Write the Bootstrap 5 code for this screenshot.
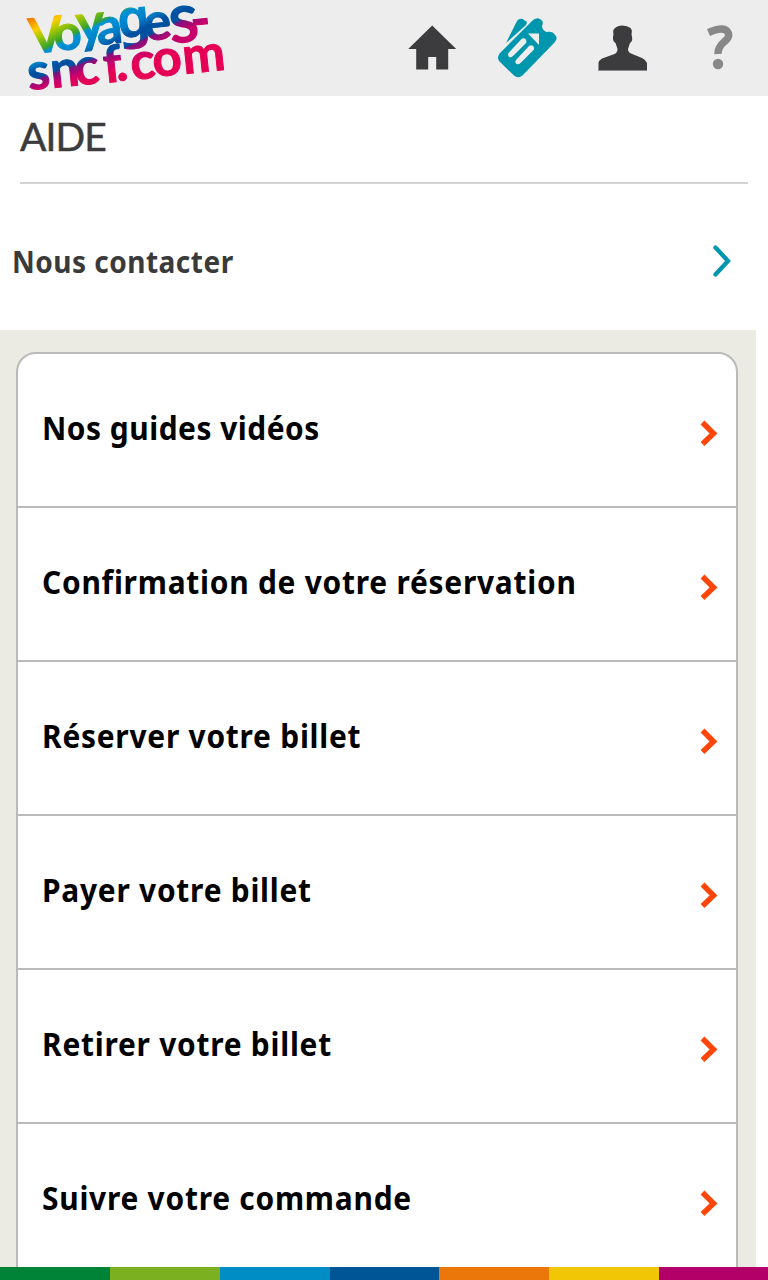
<!DOCTYPE html>
<html lang="fr">
<head>
<meta charset="utf-8">
<meta name="viewport" content="width=device-width, initial-scale=1">
<title>Aide - Voyages-sncf.com</title>
<link rel="stylesheet" href="https://cdn.jsdelivr.net/npm/bootstrap@5.3.0/dist/css/bootstrap.min.css">
<style>
body{font-family:"Noto Sans","Open Sans",sans-serif;color:#000;background:#fff}
.topbar{height:96px;background:#ededed}
.topbar svg{display:block}
.page-title{font:400 39px/48px Lato,sans-serif;letter-spacing:-.9px;color:#3c3c3d;-webkit-text-stroke:.5px #3c3c3d;margin:0 20px;padding:16px 0 22px;height:88px;border-bottom:2px solid #d4d4d4}
.contact{height:146px;padding:8px 36px 0 12px;color:#3a3a3b;font-size:30px;font-weight:700}
.contact .label-text{letter-spacing:.5px}
.help-zone{width:756px;background:#ebebe3;padding:22px 18px 0 16px}
.help-list{--bs-list-group-border-radius:20px}
.help-list .list-group-item{height:154px;padding:0 18px 4px 24px;border:2px solid #bababa;border-top-width:0;color:#000;font-size:32px;font-weight:700}
.help-list .list-group-item:first-child{height:156px;border-top-width:2px}
.help-list .list-group-item:last-child{border-radius:0}
.label-text{display:inline-block;transform:scaleX(.935);transform-origin:0 50%;white-space:nowrap;letter-spacing:.8px}
.help-list .list-group-item:first-child .label-text{letter-spacing:.54px}
.stripe{height:13px}
.stripe span{flex:110 1 0}
.stripe span:last-child{flex-grow:109}
</style>
</head>
<body class="vh-100 overflow-hidden">
<header class="topbar d-flex">
<svg width="768" height="96" viewBox="0 0 768 96" role="img" aria-label="Voyages-sncf.com">
<defs><linearGradient id="rainbow" gradientUnits="userSpaceOnUse" x1="0" y1="0" x2="54" y2="108">
<stop offset=".25" stop-color="#ef7d00"/><stop offset=".35" stop-color="#fc0"/><stop offset=".42" stop-color="#a5c800"/><stop offset=".52" stop-color="#36a32c"/><stop offset=".55" stop-color="#0092d5"/><stop offset=".66" stop-color="#0080c8"/><stop offset=".74" stop-color="#0050a0"/><stop offset=".81" stop-color="#0050a0"/><stop offset=".83" stop-color="#82107c"/><stop offset=".92" stop-color="#c8006a"/>
</linearGradient>
<linearGradient id="sunset" gradientUnits="userSpaceOnUse" x1="0" y1="0" x2="40" y2="113">
<stop offset=".55" stop-color="#36a32c"/><stop offset=".59" stop-color="#0088cc"/><stop offset=".66" stop-color="#0050a0"/><stop offset=".71" stop-color="#0050a0"/><stop offset=".735" stop-color="#82107c"/><stop offset=".8" stop-color="#c8006a"/><stop offset=".88" stop-color="#e60055"/>
</linearGradient></defs>
<g fill="url(#rainbow)" stroke="url(#rainbow)" stroke-width="1" font-family="Lato" font-weight="700" font-size="49">
<text x="31" y="54" rotate="-6">V</text>
<text x="55" y="51" rotate="-6">o</text>
<text x="78" y="43" rotate="-6" font-size="54">y</text>
<text x="98" y="45" rotate="-6" font-size="51">a</text>
<text x="119" y="38" rotate="-6" font-family="Noto Sans" font-size="52" font-weight="600">g</text>
<text x="145" y="41" rotate="-6" font-size="52">e</text>
<text x="171" y="43" rotate="-6" font-size="68" font-weight="400" stroke-width="2">s</text>
<text x="192" y="39" rotate="-6" font-size="54">-</text>
</g>
<g fill="url(#sunset)" stroke="url(#sunset)" stroke-width="1" font-family="Lato" font-weight="700" font-size="51">
<text x="29 52 76 105 117 132 154 184" y="90 88 85.500 83 81 80 77 74" rotate="-6">sncf.com</text>
</g>
<path fill="#3c3c3e" d="M432 25.500 456 49h-8v20.500h-12V57h-8v12.500h-12V49h-8z" transform="translate(.2 0)"/>
<g fill="#0097ae">
<path d="M506 43 516.500 22q2-4 6-3l4 2.500q1 2-1 4z"/>
<path fill-rule="evenodd" d="M499 54 532 21q5-5 10-.5 1.500 2 0 5.500 0 4 4.500 6 4-.5 6 .5 7 5 2 10L522.500 75.500q-4.500 3.500-8.500 0L499.500 61.500q-3-4 0-7.500zM508.500 53q-1 2 .5 4 2 1 4-1l13-13q1-2-.5-4-2-1.500-4 0zM516 60q-1.500 2 .5 4 2 1 4-1l13-13q1.500-2-.5-4-2-1.500-4 0zM528 33.500h11V45z"/>
</g>
<path fill="#3c3c3e" d="M598.500 70.500V62q1-3 5-4.500l11-4q3-1.500 3-5l-2-6q-3-2-2.500-6l.5-3q-1-4 1-5.500 3-3 8-3 5 0 8 2.500 2 2 1 6l.5 3q1 4-2 6l-2 6q0 3 3 4.500l11 4.500q4 2 5 5v8z" transform="translate(0 .5)"/>
<path d="M598.500 70.500h48.500" stroke="#8c8c8e"/>
<path d="M708.500 32.500q17-7.500 20 1 1 4-4 8-7 6-6.500 12.500" fill="none" stroke="#888" stroke-width="7.500"/>
<circle cx="718" cy="64" r="5.200" fill="#888"/>
</svg>
</header>
<main>
<h1 class="page-title">AIDE</h1>
<a class="contact d-flex justify-content-between align-items-center text-decoration-none" href="#"><span class="label-text">Nous contacter</span>
<svg width="20" height="34" viewBox="0 0 20 34"><path d="m3.500 3.500 12.500 13.500-12.500 13.500" fill="none" stroke="#0097ae" stroke-width="4.300" stroke-linecap="round"/></svg></a>
<section class="help-zone">
<div class="list-group help-list" id="help"></div>
</section>
</main>
<footer class="stripe fixed-bottom d-flex">
<span style="background:#008336"></span><span style="background:#7bb020"></span><span style="background:#008dc5"></span><span style="background:#005596"></span><span style="background:#eb7609"></span><span style="background:#f0c605"></span><span style="background:#b20068"></span>
</footer>
<script src="https://cdn.jsdelivr.net/npm/bootstrap@5.3.0/dist/js/bootstrap.bundle.min.js"></script>
<script>
document.getElementById('help').innerHTML=['Nos guides vidéos','Confirmation de votre réservation','Réserver votre billet','Payer votre billet','Retirer votre billet','Suivre votre commande'].map(function(t){
return '<a href="#" class="list-group-item d-flex justify-content-between align-items-center"><span class="label-text">'+t+'</span><svg class="mt-2" width="19" height="28" viewBox="0 0 19 28"><path d="m3.500 4.500 11 11-11 10.500" fill="none" stroke="#ff460a" stroke-width="5.500"/></svg></a>'}).join('');
</script>
</body>
</html>
